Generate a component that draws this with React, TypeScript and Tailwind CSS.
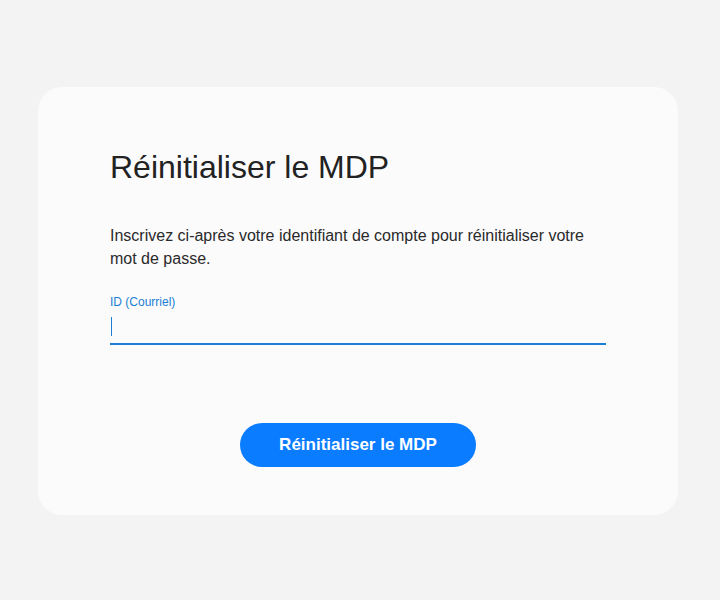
import React from 'react'

const App: React.FC = () => {
  return (
    <div className="min-h-[600px] w-full bg-[#f3f3f3] pt-[87px] pl-[38px] font-['Liberation_Sans',Arial,sans-serif]">
      <div className="bg-[#fbfbfc] rounded-[24px] w-[640px] h-[428px] px-[72px] pt-[60px]">
        <h1 className="text-[32px] leading-[40px] text-[#222]">Réinitialiser le MDP</h1>

        <p className="mt-[37px] text-[16px] leading-[23px] text-[#2a2a2a] w-[490px]">
          Inscrivez ci-après votre identifiant de compte pour réinitialiser votre mot de passe.
        </p>

        <label className="block mt-[25px]">
          <span className="block text-[12px] leading-[14px] text-[#1a7fd4]">ID (Courriel)</span>
          <div className="h-[36px] border-b-2 border-[#1a7fd4] flex items-center">
            <span className="w-px h-[19px] bg-[#1a7fd4] ml-px" />
          </div>
        </label>

        <div className="flex justify-center mt-[78px]">
          <button className="w-[236px] h-[44px] rounded-full bg-[#0a7cff] text-white font-bold text-[17px]">
            Réinitialiser le MDP
          </button>
        </div>
      </div>
    </div>
  )
}

export default App
